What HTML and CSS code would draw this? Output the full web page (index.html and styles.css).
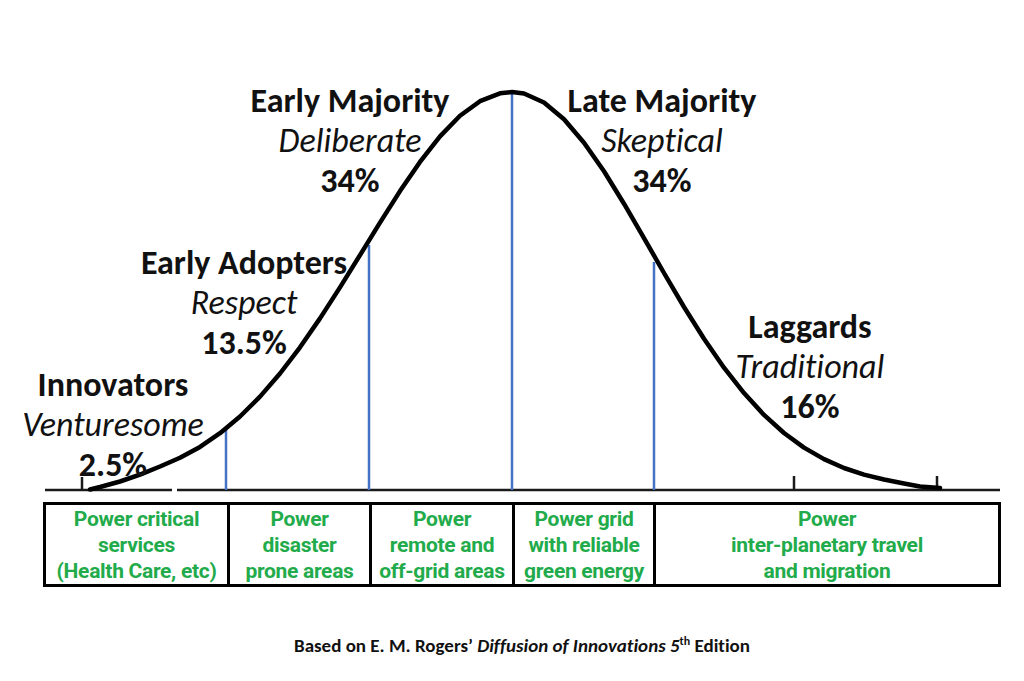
FILE: index.html
```html
<!DOCTYPE html>
<html>
<head>
<meta charset="utf-8">
<link rel="stylesheet" href="styles.css">
</head>
<body>
<div class="page">
  <div class="chart">
    <svg class="curve" width="1024" height="502" viewBox="0 0 1024 502">
      <line class="base" x1="45" y1="490" x2="172" y2="490"/>
      <line class="base" x1="177" y1="490" x2="1000" y2="490"/>
      <line class="tick" x1="82" y1="477" x2="82" y2="490"/>
      <line class="tick" x1="794" y1="476" x2="794" y2="490"/>
      <line class="tick" x1="937" y1="476" x2="937" y2="490"/>
      <line class="div" x1="226" y1="427" x2="226" y2="490"/>
      <line class="div" x1="369" y1="245" x2="369" y2="490"/>
      <line class="div" x1="512" y1="93" x2="512" y2="490"/>
      <line class="div" x1="654" y1="262" x2="654" y2="490"/>
      <polyline class="bell" points="90,489.5 100,487 120,481.5 140,474.6 160,466.5 180,457.8 200,446.9 220,433.2 240,416.5 260,396.6 280,373.5 300,347.3 320,318.4 340,287.4 360,255.1 380,222.6 400,191.1 420,161.9 440,136.4 460,115.8 480,101.2 500,93.3 512,92 524,93.5 544,102.5 564,119.3 584,142.7 604,171.3 624,203.7 644,238.1 664,273 684,307 704,338.8 724,367.7 744,393.1 764,414.9 784,433 804,447.6 824,459.1 844,468 864,474.6 884,479.5 904,483.5 920,486.5 940,488"/>
    </svg>
    <div class="label early-majority">
      <div class="title">Early Majority</div>
      <div class="trait">Deliberate</div>
      <div class="pct">34%</div>
    </div>
    <div class="label late-majority">
      <div class="title">Late Majority</div>
      <div class="trait">Skeptical</div>
      <div class="pct">34%</div>
    </div>
    <div class="label early-adopters">
      <div class="title">Early Adopters</div>
      <div class="trait">Respect</div>
      <div class="pct">13.5%</div>
    </div>
    <div class="label innovators">
      <div class="title">Innovators</div>
      <div class="trait">Venturesome</div>
      <div class="pct">2.5%</div>
    </div>
    <div class="label laggards">
      <div class="title">Laggards</div>
      <div class="trait">Traditional</div>
      <div class="pct">16%</div>
    </div>
  </div>
  <div class="uses">
    <div class="cell">Power critical<br>services<br>(Health Care, etc)</div>
    <div class="cell">Power<br>disaster<br>prone areas</div>
    <div class="cell">Power<br>remote and<br>off-grid areas</div>
    <div class="cell">Power grid<br>with reliable<br>green energy</div>
    <div class="cell">Power<br>inter-planetary travel<br>and migration</div>
  </div>
  <p class="source">Based on E. M. Rogers’ <em>Diffusion of Innovations 5</em><sup>th</sup> Edition</p>
</div>
</body>
</html>
```

FILE: styles.css
```css
html, body {
  margin: 0;
  padding: 0;
  background: #ffffff;
}
.page {
  width: 1024px;
  height: 681px;
  font-family: Carlito, Lato, "Open Sans", sans-serif;
  font-variant-ligatures: none;
  color: #111111;
  overflow: hidden;
}
.chart {
  position: relative;
  width: 1024px;
  height: 502px;
}
.curve {
  position: absolute;
  left: 0;
  top: 0;
}
.base {
  stroke: #1a1a1a;
  stroke-width: 2.5;
}
.tick {
  stroke: #1a1a1a;
  stroke-width: 2.5;
}
.div {
  stroke: #4472c4;
  stroke-width: 2.5;
}
.bell {
  fill: none;
  stroke: #000000;
  stroke-width: 4.5;
  stroke-linejoin: round;
  stroke-linecap: round;
}
.label {
  position: absolute;
  transform: translateX(-50%);
  text-align: center;
  white-space: nowrap;
  line-height: 40px;
}
.title {
  font-weight: 700;
  font-size: 34px;
}
.trait {
  font-style: italic;
  font-size: 34px;
}
.pct {
  font-weight: 700;
  font-size: 34px;
}
.early-majority { left: 350px; top: 81px; }
.late-majority { left: 662px; top: 81px; }
.early-adopters { left: 244px; top: 243px; }
.innovators { left: 113px; top: 365px; }
.laggards { left: 810px; top: 307px; }

.uses {
  margin-left: 43px;
  width: 958px;
  height: 85px;
  box-sizing: border-box;
  border: 3.5px solid #000000;
  display: grid;
  grid-template-columns: 181px 142px 143px 141px 1fr;
}
.cell {
  display: flex;
  align-items: center;
  justify-content: center;
  text-align: center;
  font-family: Roboto, "Noto Sans", sans-serif;
  font-weight: 700;
  font-size: 21px;
  line-height: 26px;
  color: #22ab4b;
  letter-spacing: -0.3px;
}
.cell + .cell {
  border-left: 3.5px solid #000000;
}
.source {
  margin: 47px 0 0 0;
  text-align: center;
  font-weight: 700;
  font-size: 19px;
  line-height: 24px;
  color: #111111;
  padding-left: 20px;
}
.source sup {
  font-size: 12px;
  line-height: 0;
}
```
